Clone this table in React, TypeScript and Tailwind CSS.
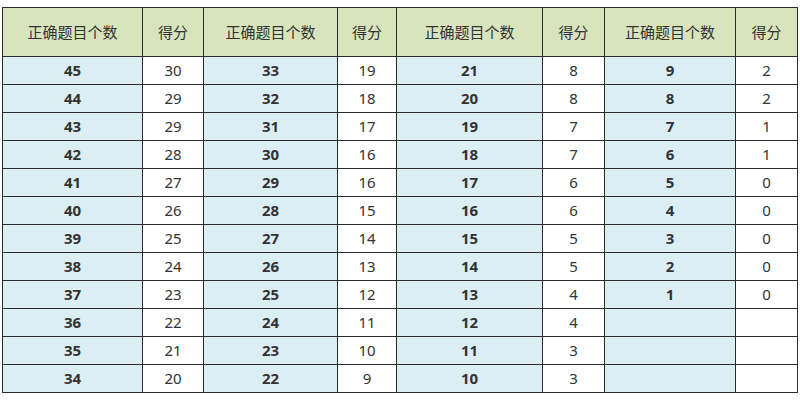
import { Fragment } from "react";

const WIDTHS = ["w-[140px]", "w-[61px]", "w-[134px]", "w-[59px]", "w-[146px]", "w-[62px]", "w-[131px]", "w-[62px]"];

const SCORES: [number[], number[]][] = [
  [[45, 44, 43, 42, 41, 40, 39, 38, 37, 36, 35, 34], [30, 29, 29, 28, 27, 26, 25, 24, 23, 22, 21, 20]],
  [[33, 32, 31, 30, 29, 28, 27, 26, 25, 24, 23, 22], [19, 18, 17, 16, 16, 15, 14, 13, 12, 11, 10, 9]],
  [[21, 20, 19, 18, 17, 16, 15, 14, 13, 12, 11, 10], [8, 8, 7, 7, 6, 6, 5, 5, 4, 4, 3, 3]],
  [[9, 8, 7, 6, 5, 4, 3, 2, 1], [2, 2, 1, 1, 0, 0, 0, 0, 0]],
];

export default function App() {
  const rows = Array.from({ length: 12 }, (_, i) => i);

  return (
    <div className="h-[400px] w-[800px] bg-white pl-[2px] pt-[7px] font-['Noto_Sans','Noto_Sans_CJK_SC',sans-serif] text-[15px] text-[#333]">
      <table className="table-fixed border-collapse">
        <colgroup>
          {WIDTHS.map((w, i) => (
            <col key={i} className={w} />
          ))}
        </colgroup>
        <thead>
          <tr className="h-[49px] bg-[#d8e4bc]">
            {SCORES.map((_, i) => (
              <Fragment key={i}>
                <th className="border border-[#2b2b2b] p-0 font-normal">正确题目个数</th>
                <th className="border border-[#2b2b2b] p-0 font-normal">得分</th>
              </Fragment>
            ))}
          </tr>
        </thead>
        <tbody>
          {rows.map((r) => (
            <tr key={r} className="h-[28px]">
              {SCORES.map(([count, score], i) => (
                <Fragment key={i}>
                  <td className="border border-[#2b2b2b] bg-[#daeef3] p-0 text-center font-bold leading-none">
                    {count[r] ?? ""}
                  </td>
                  <td className="border border-[#2b2b2b] bg-white p-0 text-center leading-none">
                    {score[r] ?? ""}
                  </td>
                </Fragment>
              ))}
            </tr>
          ))}
        </tbody>
      </table>
    </div>
  );
}
